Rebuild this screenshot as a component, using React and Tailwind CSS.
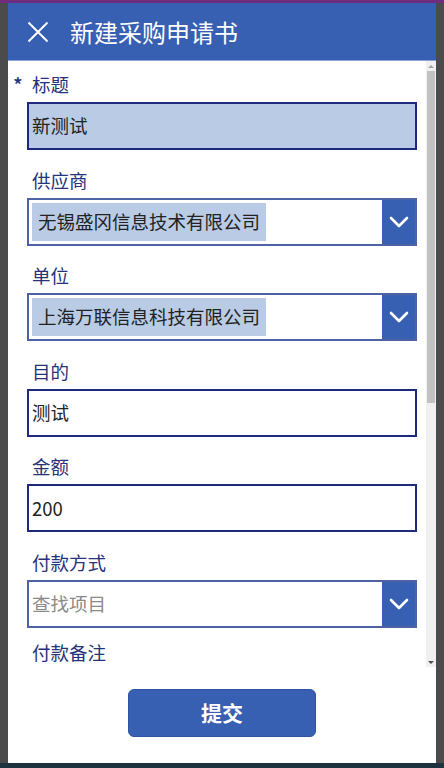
import React from "react";

const font = { fontFamily: '"Noto Sans CJK SC", "Noto Sans", sans-serif' };

function Chevron() {
  return (
    <svg width="20" height="12" viewBox="0 0 20 12" fill="none">
      <path d="M2 2 L10 10 L18 2" stroke="white" strokeWidth="2.6" strokeLinecap="round" strokeLinejoin="round" />
    </svg>
  );
}

function Label({ text, required }) {
  return (
    <div className="relative h-[24px] flex items-center pl-[5px] text-[18.5px] leading-[24px] text-[#26327a]">
      {required && <span className="absolute -left-[14px] top-[1px] text-[20px] font-medium text-[#26327a]">*</span>}
      {text}
    </div>
  );
}

function TextInput({ value, filled }) {
  return (
    <div
      className={`h-[48px] border-2 border-[#1f2a7c] flex items-center pl-[3px] text-[18.5px] text-[#222] ${
        filled ? "bg-[#b9cbe5]" : "bg-white"
      }`}
    >
      {value}
    </div>
  );
}

function Dropdown({ value, placeholder }) {
  return (
    <div className="h-[48px] border-2 border-[#5062a6] flex bg-white">
      <div className="flex-1 flex items-center p-[3px]">
        {value ? (
          <div className="h-full bg-[#b9cbe5] flex items-center px-[6px] text-[18.5px] text-[#222]">{value}</div>
        ) : (
          <div className="text-[18.5px] text-[#8a8a8a]">{placeholder}</div>
        )}
      </div>
      <div className="w-[33px] bg-[#3760b3] flex items-center justify-center">
        <Chevron />
      </div>
    </div>
  );
}

export default function App() {
  return (
    <div className="w-[444px] h-[768px] bg-[#4b4b4b] flex flex-col overflow-hidden" style={font}>
      <div className="h-[3px] bg-[#6e2c7c]" />
      <div className="flex-1 mx-[8px] flex flex-col bg-white">
        <div className="h-[58px] bg-[#3760b3] flex items-center border-b border-[#8ea3d4]">
          <svg className="ml-[19px]" width="22" height="22" viewBox="0 0 22 22" fill="none">
            <path d="M1.5 1.5 L20.5 20.5 M20.5 1.5 L1.5 20.5" stroke="white" strokeWidth="2" />
          </svg>
          <span className="ml-[21px] text-[24px] text-white leading-none">新建采购申请书</span>
        </div>

        <div className="h-[606px] flex overflow-hidden">
          <div className="flex-1 pl-[19px] pr-[9px] pt-[11px] flex flex-col gap-[17.6px]">
            <div className="flex flex-col gap-[6px]">
              <Label text="标题" required />
              <TextInput value="新测试" filled />
            </div>
            <div className="flex flex-col gap-[6px]">
              <Label text="供应商" />
              <Dropdown value="无锡盛冈信息技术有限公司" />
            </div>
            <div className="flex flex-col gap-[6px]">
              <Label text="单位" />
              <Dropdown value="上海万联信息科技有限公司" />
            </div>
            <div className="flex flex-col gap-[6px]">
              <Label text="目的" />
              <TextInput value="测试" />
            </div>
            <div className="flex flex-col gap-[6px]">
              <Label text="金额" />
              <TextInput value="200" />
            </div>
            <div className="flex flex-col gap-[6px]">
              <Label text="付款方式" />
              <Dropdown placeholder="查找项目" />
            </div>
            <div className="-mt-[6px]">
              <Label text="付款备注" />
            </div>
          </div>

          {/* scrollbar */}
          <div className="w-[10px] bg-[#f0f0f0] flex flex-col">
            <div className="h-[10px] flex items-center justify-center">
              <div className="w-0 h-0 border-l-[3px] border-r-[3px] border-b-[3px] border-l-transparent border-r-transparent border-b-[#a3a3a3]" />
            </div>
            <div className="h-[332px] mx-[1px] bg-[#c1c1c1]" />
            <div className="flex-1" />
            <div className="h-[10px] flex items-center justify-center">
              <div className="w-0 h-0 border-l-[3px] border-r-[3px] border-t-[3px] border-l-transparent border-r-transparent border-t-[#505050]" />
            </div>
          </div>
        </div>

        <div className="flex-1 flex justify-center pt-[22px]">
          <button className="w-[188px] h-[48px] rounded-[6px] bg-[#3760b3] border border-[#2e54a3] text-white text-[21px] font-bold">
            提交
          </button>
        </div>
      </div>
      <div className="h-[5px] bg-[#1e333d]" />
    </div>
  );
}
